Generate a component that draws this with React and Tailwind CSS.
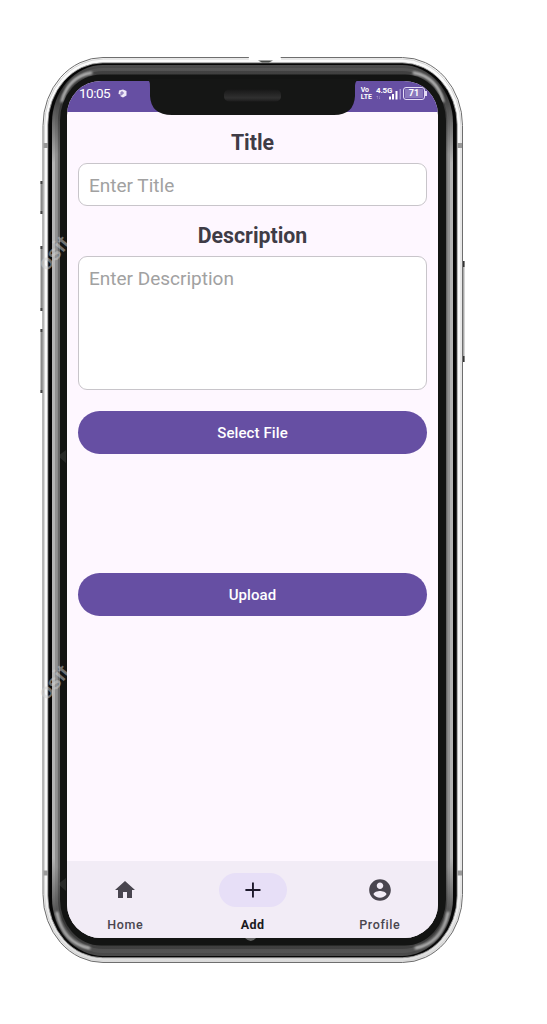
import React from 'react';

function PhoneBody() {
  return (
    <svg className="pointer-events-none absolute inset-0" width="547" height="1024" viewBox="0 0 547 1024" fill="none">
      <defs>
        <linearGradient id="metalOuter" gradientUnits="userSpaceOnUse" x1="0" y1="65" x2="0" y2="956">
          <stop offset="0" stopColor="#4c4c4c" /><stop offset="0.03" stopColor="#303030" /><stop offset="0.06" stopColor="#666" />
          <stop offset="0.11" stopColor="#b4b4b4" /><stop offset="0.89" stopColor="#b4b4b4" />
          <stop offset="0.94" stopColor="#666" /><stop offset="0.97" stopColor="#303030" /><stop offset="1" stopColor="#4c4c4c" />
        </linearGradient>
        <linearGradient id="metalMiddle" gradientUnits="userSpaceOnUse" x1="0" y1="65" x2="0" y2="956">
          <stop offset="0" stopColor="#555" /><stop offset="0.04" stopColor="#444" />
          <stop offset="0.1" stopColor="#919191" /><stop offset="0.9" stopColor="#919191" />
          <stop offset="0.96" stopColor="#444" /><stop offset="1" stopColor="#555" />
        </linearGradient>
        <linearGradient id="metalInner" gradientUnits="userSpaceOnUse" x1="0" y1="65" x2="0" y2="956">
          <stop offset="0" stopColor="#444" /><stop offset="0.04" stopColor="#333" />
          <stop offset="0.1" stopColor="#686868" /><stop offset="0.9" stopColor="#686868" />
          <stop offset="0.96" stopColor="#333" /><stop offset="1" stopColor="#444" />
        </linearGradient>
        <linearGradient id="shell" gradientUnits="userSpaceOnUse" x1="0" y1="57" x2="0" y2="962">
          <stop offset="0" stopColor="#fafafa" /><stop offset="0.9" stopColor="#f8f8f8" /><stop offset="1" stopColor="#dedede" />
        </linearGradient>
        <filter id="soft" x="-20%" y="-20%" width="140%" height="140%"><feGaussianBlur stdDeviation="1.3" /></filter>
      </defs>
      <path d="M41.5 181v33M41.5 246v65M41.5 329v64" stroke="#8a8a8a" strokeWidth="2" />
      <path d="M41.5 181v3M41.5 211v3M41.5 246v3M41.5 308v3M41.5 329v3M41.5 390v3" stroke="#444" strokeWidth="2" />
      <path d="M463.5 261v101" stroke="#aaa" strokeWidth="2" />
      <path d="M463.5 261v6M463.5 356v6" stroke="#333" strokeWidth="2" />
      <rect x="43" y="57.5" width="419.5" height="905" rx="60" ry="68" fill="url(#shell)" stroke="#6e6e6e" />
      <rect x="44.5" y="59" width="416.5" height="902" rx="59" ry="67" stroke="#d6d6d6" />
      <rect x="47.8" y="62.8" width="409.4" height="895" rx="55" ry="62" fill="#060606" stroke="#aaa" strokeWidth="0.8" />
      <rect x="52" y="65" width="401" height="891" rx="51" ry="58" fill="url(#metalOuter)" />
      <rect x="55" y="68" width="395" height="885" rx="48" ry="55" fill="url(#metalMiddle)" />
      <rect x="57.8" y="71" width="389.6" height="878" rx="45" ry="51" fill="url(#metalInner)" />
      <g stroke="#d8d8d8" strokeWidth="3" strokeOpacity="0.75" strokeLinecap="round" filter="url(#soft)">
        <path d="M62 101Q68 77 91 73M443 101Q437 77 414 73" />
        <path d="M57 913Q63 943 89 948M448 913Q442 943 416 948" />
      </g>
      <rect x="60" y="74.5" width="386" height="871" rx="41" ry="46" fill="#131413" />
      <path d="M43.5 145.5h4.5M457.5 145.5h4.5M43.5 873h4.5M457.5 873h4.5" stroke="#999" strokeWidth="5" />
      <path d="M250 56H278Q282 57 281 60H249Q248 57 250 56Z" fill="#fff" />
      <path d="M258 60.5H273L269 62.5H262Z" fill="#4a4d4a" />
    </svg>
  );
}

function PhoneOverlay() {
  return (
    <svg className="pointer-events-none absolute inset-0" width="547" height="1024" viewBox="0 0 547 1024" fill="none">
      <defs>
        <linearGradient id="speaker" x1="0" y1="0" x2="0" y2="1">
          <stop offset="0" stopColor="#181818" /><stop offset="0.7" stopColor="#303030" /><stop offset="1" stopColor="#1c1c1c" />
        </linearGradient>
        <clipPath id="leftRim"><rect x="38" y="220" width="29" height="485" /></clipPath>
      </defs>
      <path d="M147 79C150 82 150 82 150 88V96Q151 115 172 115H334Q354 115 355 96V88C355 82 356 81 359 79Z" fill="#151615" />
      <rect x="224" y="89.5" width="57" height="12" rx="5" fill="url(#speaker)" />
      <path d="M245 938h11q-5 6-11 0Z" fill="#666" />
      <g clipPath="url(#leftRim)" fill="#d0d0d0" fillOpacity="0.5" fontFamily="Liberation Sans" fontSize="21" fontWeight="700">
        <text transform="translate(47 272) rotate(-50)">osit</text>
        <text transform="translate(47 701) rotate(-50)">osit</text>
      </g>
      <path d="M58 456l8-6v13ZM58 884l8-6v13Z" fill="#666" fillOpacity="0.25" />
    </svg>
  );
}

function StatusBar() {
  return (
    <header className="flex h-[31px] shrink-0 items-start justify-between bg-[#664fa3] pt-[4px] pr-[11px] pl-[12px] text-white">
      <div className="flex items-center gap-[8px]">
        <span className="text-[13.5px] leading-[17px] tracking-[-0.5px]">10:05</span>
        <svg width="9" height="9" viewBox="0 0 9 9"><path d="M1 1.5 5 .4l3.5 1.7v4.3L5 8.6 2.5 7.3V5.6L.5 5Z" fill="#eee9f8" /><path d="M3 3h2v2H3M3 3v3.5" fill="none" stroke="#664fa3" strokeWidth=".8" /></svg>
      </div>
      <div className="flex h-[17px] items-center">
        <div className="mr-[4px] text-[7px] leading-[7px] font-bold"><div>Vo</div><div>LTE</div></div>
        <div className="w-[13px] text-[8px] leading-[7px] font-bold tracking-[-0.2px] whitespace-nowrap"><div>4.5G</div><div className="text-[5px] leading-[6px] opacity-60">↑↓</div></div>
        <svg width="12" height="13" viewBox="0 0 12 13"><path d="M0 9.5h2v3H0ZM3 7h2v5.5H3ZM6.5 4h2v8.5h-2Z" fill="#fff" /><path d="M10.5 2H12v10.5h-1.5Z" fill="#9f8dcc" /></svg>
        <div className="ml-[2px] flex h-[13px] w-[22px] items-center justify-center rounded-[3px] border border-[#e4dcf5] p-px">
          <div className="flex h-full w-full items-center justify-center bg-[#8b79bd] text-[9px] leading-none font-bold">71</div>
        </div>
        <div className="h-[5px] w-[2px] bg-[#e4dcf5]" />
      </div>
    </header>
  );
}

function HomeIcon() {
  return <svg width="24" height="24" viewBox="0 0 24 24" fill="#49454f"><path d="M10 20v-6h4v6h5v-8h3L12 3 2 12h3v8z" /></svg>;
}

function AddIcon() {
  return <svg width="24" height="24" viewBox="0 0 24 24" fill="#1d192b"><path d="M19.5 13h-6.6v6.5h-1.9V13H4.4v-1.9H11V4.5h1.9v6.6h6.6z" /></svg>;
}

function ProfileIcon() {
  return <svg width="26" height="26" viewBox="0 0 24 24" fill="#49454f"><path d="M12 2C6.48 2 2 6.48 2 12s4.48 10 10 10 10-4.48 10-10S17.52 2 12 2zm0 3c1.66 0 3 1.34 3 3s-1.34 3-3 3-3-1.34-3-3 1.34-3 3-3zm0 14.2c-2.5 0-4.71-1.28-6-3.22.03-1.99 4-3.08 6-3.08 1.99 0 5.97 1.09 6 3.08-1.29 1.94-3.5 3.22-6 3.22z" /></svg>;
}

function NavItem({ label, active, children }) {
  return (
    <div className="flex w-[127.3px] shrink-0 flex-col items-center pt-[12px]">
      <div className={active ? 'flex h-[34px] w-[68px] items-center justify-center rounded-full bg-[#e7dff7]' : 'flex h-[34px] w-[68px] items-center justify-center'}>{children}</div>
      <span className={active ? 'mt-[9px] text-[12.5px] leading-[18px] font-bold tracking-[0.4px] text-[#1c1a20]' : 'mt-[9px] text-[12.5px] leading-[18px] font-medium tracking-[0.6px] text-[#49454f]'}>{label}</span>
    </div>
  );
}

export default function App() {
  return (
    <div className="relative h-[1024px] w-[547px] overflow-hidden bg-white pt-[81px] pl-[67px] font-['Roboto',sans-serif]">
      <PhoneBody />
      <div className="relative flex h-[857px] w-[371px] flex-col overflow-hidden rounded-[34px] bg-[#fef7ff]">
        <StatusBar />
        <main className="flex flex-1 flex-col pr-[11px] pl-[11px]">
          <label className="mt-[18px] text-center text-[21.3px] leading-[26px] font-bold text-[#3f3c46]">Title</label>
          <div className="mt-[7px] h-[43px] rounded-[9px] border border-[#c8c5ca] bg-white pl-[10px] text-[19px] leading-[43px] text-[#a1a1a1]">Enter Title</div>
          <label className="mt-[17px] text-center text-[21.3px] leading-[26px] font-bold text-[#3f3c46]">Description</label>
          <div className="mt-[7px] h-[134px] rounded-[9px] border border-[#c8c5ca] bg-white pt-[9px] pl-[10px] text-[19px] leading-[26px] text-[#a1a1a1]">Enter Description</div>
          <button className="mt-[21px] h-[43px] rounded-full bg-[#664fa3] pt-px text-[15px] font-medium tracking-[0.1px] text-white">Select File</button>
          <button className="mt-[119px] h-[43px] rounded-full bg-[#664fa3] pt-px text-[15px] font-medium tracking-[0.1px] text-white">Upload</button>
        </main>
        <nav className="flex h-[77px] shrink-0 justify-center bg-[#f2ecf6]">
          <NavItem label="Home"><HomeIcon /></NavItem>
          <NavItem label="Add" active><AddIcon /></NavItem>
          <NavItem label="Profile"><ProfileIcon /></NavItem>
        </nav>
      </div>
      <PhoneOverlay />
    </div>
  );
}
